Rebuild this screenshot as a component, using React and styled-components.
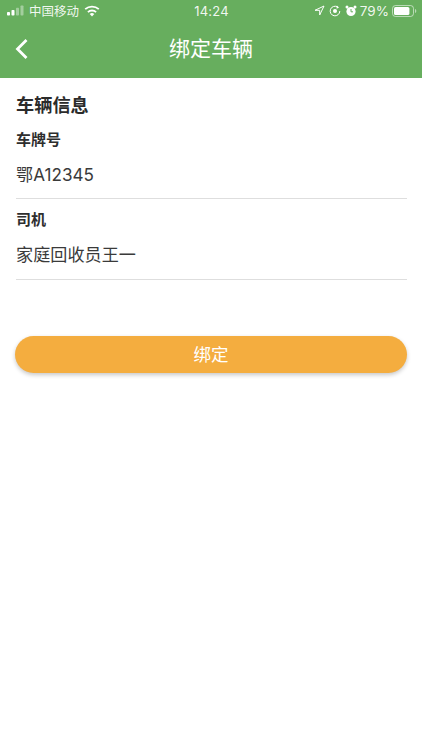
import React from 'react';
import styled, { createGlobalStyle } from 'styled-components';

const Global = createGlobalStyle`
  html, body { margin: 0; padding: 0; background: #fff; }
  * { box-sizing: border-box; }
  body { font-family: "Inter", "Noto Sans CJK SC", sans-serif; }
`;
const Page = styled.div`
  width: 422px; height: 750px; background: #fff; overflow: hidden;
  display: flex; flex-direction: column;
  font-family: "Inter", "Noto Sans CJK SC", sans-serif;
`;
const Header = styled.header`
  height: 78px; background: #67ae5e; color: #fff; display: flex; flex-direction: column; flex: none;
`;
const StatusBar = styled.div`
  height: 21px; padding: 0 5px 0 6px; display: grid; grid-template-columns: 1fr auto 1fr; align-items: center;
  font-size: 12.5px; color: rgba(255,255,255,.92);
`;
const StatusLeft = styled.div`display: flex; align-items: center; gap: 5px;`;
const StatusRight = styled.div`display: flex; align-items: center; justify-content: flex-end; gap: 4px;`;
const Percent = styled.span`font-size: 13.5px; margin: 0 -1px;`;
const Clock = styled.div`font-size: 13px; letter-spacing: .2px;`;
const NavBar = styled.div`
  height: 57px; display: flex; align-items: center; justify-content: center; position: relative; padding-bottom: 2px;
`;
const Back = styled.svg`position: absolute; left: 15px; top: 17px;`;
const Title = styled.h1`margin: 0; font-size: 21px; font-weight: 400; line-height: 1;`;
const Content = styled.main`padding: 0 15px 0 16px; display: flex; flex-direction: column;`;
const SectionTitle = styled.h2`
  margin: 16px 0 0; font-size: 18.2px; line-height: 22px; font-weight: 700; color: #2b2b2b;
`;
const Field = styled.div`
  display: flex; flex-direction: column; border-bottom: 1px solid #dedede; height: 81px;
  &:first-of-type { height: 78px; margin-top: 5px; }
`;
const FieldLabel = styled.label`font-size: 15px; line-height: 18px; font-weight: 700; color: #2e2e2e; margin-top: 12px;`;
const FieldValue = styled.div`font-size: 17.1px; line-height: 22px; font-weight: 400; letter-spacing: .05px; color: #3a3a3a; margin-top: 15px;`;
const FirstLabel = styled(FieldLabel)`margin-top: 10px;`;
const Button = styled.button`
  margin: 56px 0 0 -1px; height: 37px; width: 392px; padding: 0 0 2px; border: none; border-radius: 19px; background: #f4ad3f; color: #fff;
  font: 400 17.5px "Inter", "Noto Sans CJK SC", sans-serif;
  box-shadow: 0 2px 4px rgba(0,0,0,.22);
`;

const Signal = () => (
  <svg width="18" height="11" viewBox="0 0 18 11">
    <rect x="1" y="7" width="3" height="3.5" rx=".8" fill="#fff" />
    <rect x="5.5" y="5" width="3" height="5.5" rx=".8" fill="#fff" />
    <rect x="10" y="2.8" width="3" height="7.7" rx=".8" fill="#fff" opacity=".4" />
    <rect x="14.5" y=".5" width="3" height="10" rx=".8" fill="#fff" opacity=".4" />
  </svg>
);
const Wifi = () => (
  <svg width="16" height="12" viewBox="0 0 16 12">
    <path d="M8 11.5 5.7 9a3.3 3.3 0 0 1 4.6 0Z" fill="#fff" />
    <path d="M3.9 7.1a6 6 0 0 1 8.2 0" fill="none" stroke="#fff" strokeWidth="1.8" />
    <path d="M1.2 4.2a10 10 0 0 1 13.6 0" fill="none" stroke="#fff" strokeWidth="1.8" />
  </svg>
);
const Location = () => (
  <svg width="11" height="11" viewBox="0 0 11 11">
    <path d="M10 1 1 5.3h4.7V10Z" fill="none" stroke="#fff" strokeWidth="1" strokeLinejoin="round" />
  </svg>
);
const Lock = () => (
  <svg width="12" height="12" viewBox="0 0 12 12">
    <path d="M10.8 6A4.8 4.8 0 1 1 8.6 2" fill="none" stroke="#fff" strokeWidth="1" />
    <path d="M7.8 .6 10 2.6 7.6 3.8Z" fill="#fff" />
    <circle cx="6" cy="6" r="2" fill="#fff" />
  </svg>
);
const Alarm = () => (
  <svg width="12" height="12" viewBox="0 0 12 12">
    <circle cx="6" cy="6.5" r="4.6" fill="#fff" />
    <path d="M6 4v2.8h2" fill="none" stroke="#67ae5e" strokeWidth="1" />
    <circle cx="2" cy="2" r="1.5" fill="#fff" />
    <circle cx="10" cy="2" r="1.5" fill="#fff" />
  </svg>
);
const Battery = () => (
  <svg width="25" height="12" viewBox="0 0 25 12">
    <rect x=".5" y=".5" width="21" height="11" rx="3" fill="none" stroke="#fff" strokeOpacity=".55" />
    <rect x="2" y="2" width="15.4" height="8" rx="1.6" fill="#fff" />
    <path d="M23 4v4c.8-.3 1.3-1.1 1.3-2s-.5-1.7-1.3-2Z" fill="#fff" fillOpacity=".55" />
  </svg>
);

export default function App() {
  return (
    <Page>
      <Global />
      <Header>
        <StatusBar>
          <StatusLeft><Signal /><span>中国移动</span><Wifi /></StatusLeft>
          <Clock>14:24</Clock>
          <StatusRight><Location /><Lock /><Alarm /><Percent>79%</Percent><Battery /></StatusRight>
        </StatusBar>
        <NavBar>
          <Back width="14" height="22" viewBox="0 0 14 22">
            <path d="M11.5 2 2.5 11l9 9" fill="none" stroke="#fff" strokeWidth="2.8" />
          </Back>
          <Title>绑定车辆</Title>
        </NavBar>
      </Header>
      <Content>
        <SectionTitle>车辆信息</SectionTitle>
        <Field>
          <FirstLabel>车牌号</FirstLabel>
          <FieldValue>鄂A12345</FieldValue>
        </Field>
        <Field>
          <FieldLabel>司机</FieldLabel>
          <FieldValue>家庭回收员王一</FieldValue>
        </Field>
        <Button>绑定</Button>
      </Content>
    </Page>
  );
}
